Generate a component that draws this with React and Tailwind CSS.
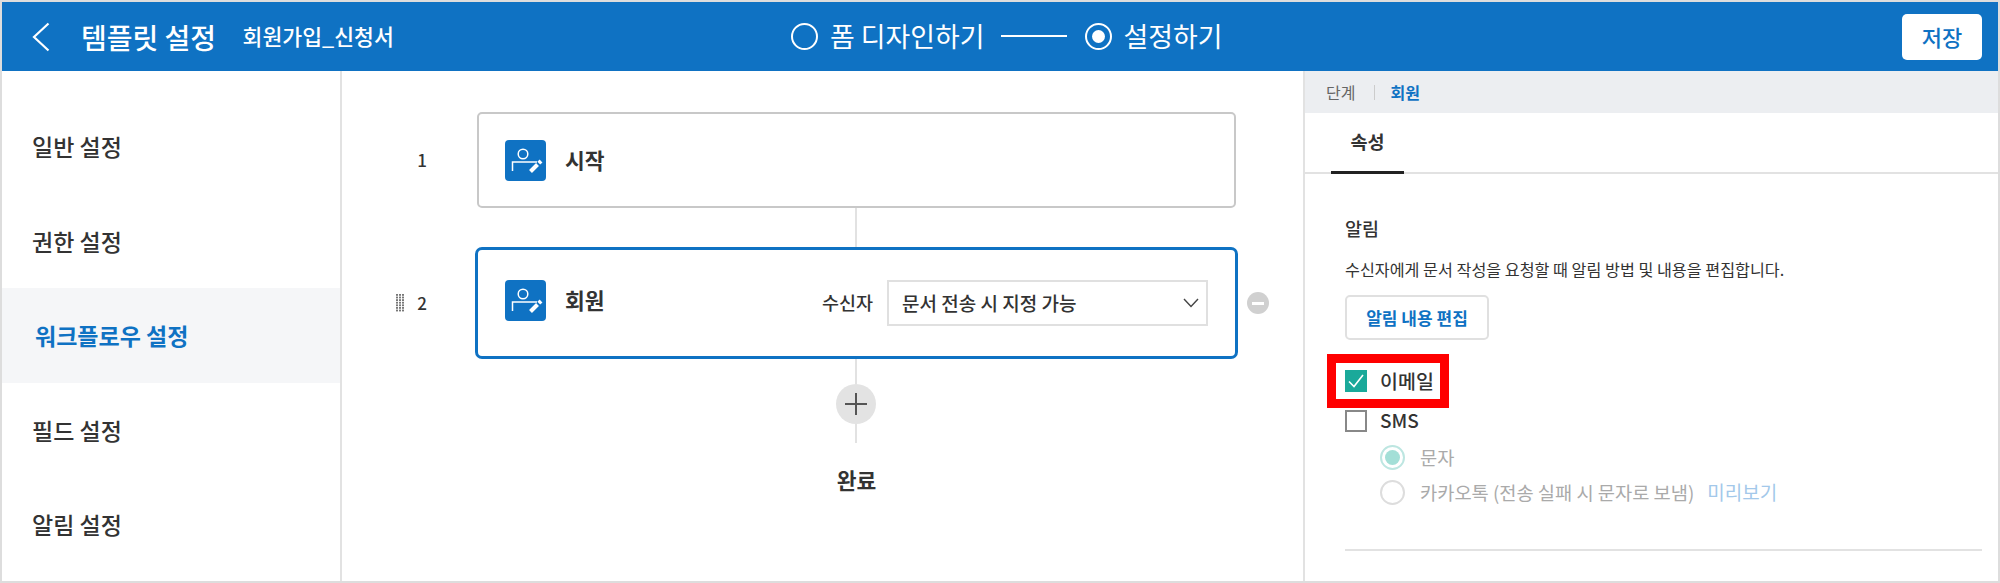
import React from 'react';

const menus = ['일반 설정', '권한 설정', '워크플로우 설정', '필드 설정', '알림 설정'];

const StepIcon = () => (
  <div className="w-[41px] h-[41px] shrink-0 rounded-[4px] bg-[#0f72c3]">
    <svg width="41" height="41" viewBox="0 0 41 41" fill="none">
      <circle cx="18" cy="14" r="4.8" stroke="white" strokeWidth="1.5" />
      <path d="M7.5 31V22H32" stroke="white" strokeWidth="1.5" />
      <path d="M25.5 31.5L32.5 24.5" stroke="white" strokeWidth="4" />
      <path d="M33.8 23.2L36 21" stroke="white" strokeWidth="4" />
    </svg>
  </div>
);

const DragHandle = () => (
  <svg width="8" height="18" viewBox="0 0 8 18" className="mr-[13px]">
    {[0, 1, 2, 3, 4, 5, 6].map((row) =>
      [0, 3, 6].map((col) => (
        <rect key={`${row}-${col}`} x={col} y={row * 2.6} width="2" height="1.8" fill="#777" />
      ))
    )}
  </svg>
);

const Connector = ({ height }) => (
  <div className="ml-[133px] w-[761px] flex justify-center">
    <div className={`w-[2px] bg-[#e2e2e2] ${height}`} />
  </div>
);

const App = () => {
  return (
    <div
      className="w-[2000px] h-[583px] border-2 border-[#dddddd] bg-white flex flex-col overflow-hidden text-[#333333]"
      style={{ fontFamily: '"Noto Sans CJK KR", "Noto Sans", sans-serif' }}
    >
      {/* header */}
      <div className="h-[69px] shrink-0 bg-[#0f72c3] flex items-center text-white">
        <div className="w-[789px] shrink-0 flex items-center pl-[30px]">
          <svg width="18" height="30" viewBox="0 0 18 30" fill="none">
            <path d="M16.5 1.5L2 15L16.5 28.5" stroke="white" strokeWidth="2.2" />
          </svg>
          <span className="ml-[31px] text-[28px] font-medium">템플릿 설정</span>
          <span className="ml-[26.5px] text-[21.6px] font-medium">회원가입_신청서</span>
        </div>
        <div className="flex items-center text-[26.9px]">
          <div className="w-[27px] h-[27px] rounded-full border-2 border-white" />
          <span className="ml-[12px]">폼 디자인하기</span>
          <div className="ml-[17px] w-[66px] h-[2px] bg-white" />
          <div className="ml-[18px] w-[27px] h-[27px] rounded-full border-2 border-white flex items-center justify-center">
            <div className="w-[13px] h-[13px] rounded-full bg-white" />
          </div>
          <span className="ml-[11px]">설정하기</span>
        </div>
        <button className="ml-auto mr-[16px] w-[80px] h-[46px] rounded-[5px] bg-white text-[22px] font-medium text-[#0f72c3]">
          저장
        </button>
      </div>

      <div className="flex-1 flex min-h-0">
        {/* sidebar */}
        <div className="w-[340px] shrink-0 border-r-2 border-[#e2e2e2] pt-[28px]">
          {menus.map((menu, i) => (
            <div
              key={menu}
              className={
                i === 2
                  ? 'h-[94.5px] flex items-center pl-[33px] bg-[#f5f6f8] text-[23px] font-bold text-[#0f72c3]'
                  : 'h-[94.5px] flex items-center pl-[30px] text-[23px] font-medium'
              }
            >
              {menu}
            </div>
          ))}
        </div>

        {/* workflow */}
        <div className="flex-1 pt-[41px]">
          <div className="flex items-center">
            <div className="w-[133px] flex justify-end pr-[48px] text-[17px] font-medium">1</div>
            <div className="w-[763px] flex justify-center">
              <div className="w-[759px] h-[96px] rounded-[5px] border-2 border-[#c8c8c8] flex items-center pl-[26px]">
                <StepIcon />
                <span className="ml-[19px] text-[21.5px] font-bold">시작</span>
              </div>
            </div>
          </div>
          <Connector height="h-[39px]" />
          <div className="flex items-center">
            <div className="w-[133px] flex items-center justify-end pr-[48px] text-[17px] font-medium">
              <DragHandle />
              2
            </div>
            <div className="w-[763px] h-[112px] rounded-[7px] border-[3px] border-[#0f72c3] flex items-start pt-[30px] pl-[27px] pr-[27px]">
              <StepIcon />
              <span className="ml-[19px] h-[41px] flex items-center text-[21.5px] font-bold">회원</span>
              <span className="ml-auto h-[46px] flex items-center text-[18.5px] font-medium">수신자</span>
              <div className="ml-[14px] w-[321px] h-[46px] border-2 border-[#e0e0e0] flex items-center justify-between pl-[13px] pr-[7px] text-[19px] font-medium">
                문서 전송 시 지정 가능
                <svg width="16" height="10" viewBox="0 0 16 10" fill="none">
                  <path d="M1 1L8 8.5L15 1" stroke="#444444" strokeWidth="1.4" />
                </svg>
              </div>
            </div>
            <div className="ml-[9px] w-[22px] h-[22px] rounded-full bg-[#d0d0d0] flex items-center justify-center">
              <div className="w-[12px] h-[3px] bg-white" />
            </div>
          </div>
          <Connector height="h-[25px]" />
          <div className="ml-[133px] w-[761px] flex justify-center">
            <div className="w-[40px] h-[40px] rounded-full bg-[#e3e3e3] flex items-center justify-center">
              <svg width="22" height="22" viewBox="0 0 22 22" fill="none">
                <path d="M0 11H22M11 0V22" stroke="#555555" strokeWidth="2" />
              </svg>
            </div>
          </div>
          <Connector height="h-[19px]" />
          <div className="ml-[133px] w-[763px] mt-[24px] flex justify-center text-[21.5px] font-bold leading-[26px]">
            완료
          </div>
        </div>

        {/* right panel */}
        <div className="w-[695px] shrink-0 border-l-2 border-[#e2e2e2]">
          <div className="h-[42px] bg-[#eceef1] flex items-center pl-[21px] text-[16px]">
            <span className="text-[#666666]">단계</span>
            <div className="ml-[19px] w-[1px] h-[15px] bg-[#cccccc]" />
            <span className="ml-[15px] font-bold text-[#0f72c3]">회원</span>
          </div>
          <div className="h-[61px] border-b-2 border-[#e2e2e2] flex">
            <div className="ml-[26px] w-[73px] h-[61px] border-b-[3px] border-[#222222] flex items-center justify-center text-[18.5px] font-bold">
              속성
            </div>
          </div>
          <div className="pl-[40px] pr-[16px] pt-[42px]">
            <div className="text-[18.5px] leading-[24px] font-medium">알림</div>
            <div className="mt-[19px] text-[16.2px] leading-[20px]">
              수신자에게 문서 작성을 요청할 때 알림 방법 및 내용을 편집합니다.
            </div>
            <button className="mt-[16px] w-[144px] h-[45px] rounded-[5px] border-2 border-[#e0e0e0] text-[17px] font-bold text-[#0f72c3]">
              알림 내용 편집
            </button>
            <div className="mt-[14px] -ml-[18px] w-[122px] h-[54px] border-[9px] border-[#ff0000] flex items-center pl-[9px]">
              <div className="w-[22px] h-[22px] shrink-0 bg-[#1aa99a] flex items-center justify-center">
                <svg width="16" height="14" viewBox="0 0 16 14" fill="none">
                  <path d="M1 7.5L6 12.5L15 1" stroke="white" strokeWidth="1.6" />
                </svg>
              </div>
              <span className="ml-[13px] text-[19.5px] font-medium whitespace-nowrap">이메일</span>
            </div>
            <div className="h-[25px] flex items-center">
              <div className="w-[22px] h-[22px] border-2 border-[#888888] bg-white" />
              <span className="ml-[13px] text-[19px] font-medium">SMS</span>
            </div>
            <div className="pl-[35px] mt-[12px] text-[#aaaaaa] text-[18.7px]">
              <div className="h-[25px] flex items-center">
                <div className="w-[25px] h-[25px] rounded-full border-2 border-[#bde6e1] flex items-center justify-center">
                  <div className="w-[15px] h-[15px] rounded-full bg-[#a3dfd7]" />
                </div>
                <span className="ml-[15px]">문자</span>
              </div>
              <div className="mt-[10px] h-[25px] flex items-center">
                <div className="w-[25px] h-[25px] rounded-full border-2 border-[#dddddd]" />
                <span className="ml-[15px]">카카오톡 (전송 실패 시 문자로 보냄)</span>
                <span className="ml-[13px] text-[19px] text-[#a3c8ea]">미리보기</span>
              </div>
            </div>
            <div className="mt-[44px] h-[2px] bg-[#e2e2e2]" />
          </div>
        </div>
      </div>
    </div>
  );
};

export default App;
